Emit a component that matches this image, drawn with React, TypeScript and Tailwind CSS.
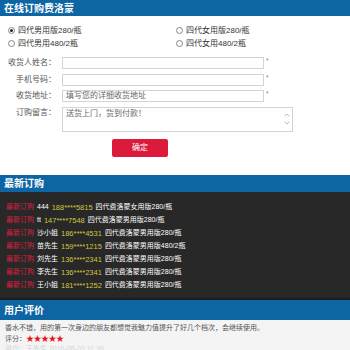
import { ChevronUp, ChevronDown } from 'lucide-react';

const orders = [
  { name: '444', phone: '188****5815', product: '四代费洛蒙女用版280/瓶' },
  { name: 'tt', phone: '147****7548', product: '四代费洛蒙男用版280/瓶' },
  { name: '沙小姐', phone: '186****4531', product: '四代费洛蒙男用版280/瓶' },
  { name: '苗先生', phone: '159****1215', product: '四代费洛蒙男用版480/2瓶' },
  { name: '刘先生', phone: '136****2341', product: '四代费洛蒙男用版280/瓶' },
  { name: '李先生', phone: '136****2341', product: '四代费洛蒙男用版280/瓶' },
  { name: '王小姐', phone: '181****1252', product: '四代费洛蒙男用版280/瓶' },
];

const font = { fontFamily: '"Liberation Sans", "Noto Sans CJK SC", sans-serif' };

function Radio({ checked, label }: { checked?: boolean; label: string }) {
  return (
    <div className="flex items-center h-[13px]">
      <span className="w-[7px] h-[7px] rounded-full border border-[#888] bg-white flex items-center justify-center">
        {checked && <span className="w-[3px] h-[3px] rounded-full bg-[#222]" />}
      </span>
      <span className="ml-[3px] text-[8px] text-[#333]">{label}</span>
    </div>
  );
}

function SectionTitle({ title, h }: { title: string; h: string }) {
  return (
    <div className={`${h} bg-[#0e65a3] flex items-center pl-[4px] text-white font-bold text-[10px]`}>
      {title}
    </div>
  );
}

function Field({ label, placeholder }: { label: string; placeholder?: string }) {
  return (
    <div className="flex items-center h-[12px]">
      <span className="w-[57px] text-right text-[8px] text-[#555] pr-[1px]">{label}</span>
      <div className="ml-[5px] w-[202px] h-[12px] border border-[#d4d4d4] bg-white text-[8px] text-[#666] leading-[10px] pl-[3px]">
        {placeholder}
      </div>
      <span className="ml-[2px] text-[#e0607a] text-[7px] self-start leading-[8px]">*</span>
    </div>
  );
}

export default function App() {
  return (
    <div className="w-[350px] h-[350px] overflow-hidden bg-white" style={font}>
      <SectionTitle title="在线订购费洛蒙" h="h-[16px]" />

      {/* order form */}
      <div className="h-[159px] pt-[8px] flex flex-col">
        <div className="grid grid-cols-[168px_1fr] pl-[8px]">
          <Radio checked label="四代男用版280/瓶" />
          <Radio label="四代女用版280/瓶" />
          <Radio label="四代男用480/2瓶" />
          <Radio label="四代女用480/2瓶" />
        </div>

        <div className="mt-[7px] flex flex-col gap-[4.5px]">
          <Field label="收货人姓名：" />
          <Field label="手机号码：" />
          <Field label="收货地址：" placeholder="填写您的详细收货地址" />
          <div className="flex items-start h-[25px]">
            <span className="w-[57px] text-right text-[8px] text-[#555] pr-[1px] leading-[12px]">订购留言：</span>
            <div className="ml-[5px] w-[231px] h-[25px] border border-[#d4d4d4] bg-white flex">
              <span className="flex-1 text-[8px] text-[#666] pl-[3px] leading-[11px]">送货上门，货到付款！</span>
              <div className="w-[10px] flex flex-col items-center justify-center text-[#999]">
                <ChevronUp className="w-[8px] h-[8px]" strokeWidth={2} />
                <ChevronDown className="w-[8px] h-[8px]" strokeWidth={2} />
              </div>
            </div>
          </div>
        </div>

        <div className="mt-[7px] pl-[112px] flex">
          <button className="w-[56px] h-[18px] bg-[#dc1a3c] rounded-[2px] text-white text-[8px] flex items-center justify-center">确定</button>
        </div>
      </div>

      <SectionTitle title="最新订购" h="h-[17px]" />

      {/* latest orders */}
      <div className="h-[108px] bg-[#282828] pt-[9px] border-b-[2px] border-[#1c1c1c]">
        {orders.map((o, i) => (
          <div key={i} className="h-[13px] flex items-center pl-[6px] text-[7px] whitespace-nowrap">
            <span className="text-[#d8213f]">最新订购</span>
            <span className="ml-[3px] text-white">{o.name}</span>
            <span className="ml-[3px] text-[#d2c53c] text-[7.5px]">{o.phone}</span>
            <span className="ml-[3px] text-white">{o.product}</span>
          </div>
        ))}
      </div>

      <SectionTitle title="用户评价" h="h-[20px]" />

      {/* reviews */}
      <div className="bg-[#f4f4f4] pt-[2px] pl-[5px] text-[7px] text-[#555] h-[30px]">
        <p className="leading-[11px]">香水不错，用的第一次身边的朋友都想觉我魅力值提升了好几个档次，会继续使用。</p>
        <p className="leading-[11px] flex items-center">
          评分：<span className="text-[#e8101a] text-[8px] tracking-[-0.5px]">★★★★★</span>
        </p>
        <p className="leading-[9px] text-[#d4d4d4]">用户：王先生 2016-08-03 11:39</p>
      </div>
    </div>
  );
}
